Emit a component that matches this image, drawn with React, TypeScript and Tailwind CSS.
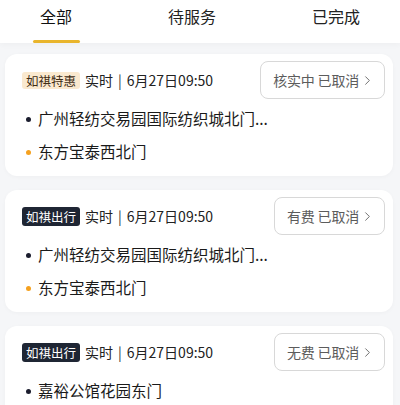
import { ChevronRight } from "lucide-react"

type Order = {
  brand: string
  brandTone: "light" | "dark"
  status: string
  from: string
  to?: string
}

const orders: Order[] = [
  { brand: "如祺特惠", brandTone: "light", status: "核实中 已取消", from: "广州轻纺交易园国际纺织城北门...", to: "东方宝泰西北门" },
  { brand: "如祺出行", brandTone: "dark", status: "有费 已取消", from: "广州轻纺交易园国际纺织城北门...", to: "东方宝泰西北门" },
  { brand: "如祺出行", brandTone: "dark", status: "无费 已取消", from: "嘉裕公馆花园东门", to: "天河城" },
]

const tabs = ["全部", "待服务", "已完成"]

const OrderCard = ({ order }: { order: Order }) => {
  return (
    <div className="ml-[5px] mr-[7px] h-[122px] shrink-0 rounded-[12px] bg-white pl-[17px] pr-[8px] shadow-[0_1px_4px_rgba(0,0,0,0.03)]">
      <div className="flex items-center justify-between pt-[7px]">
        <div className="flex items-center gap-[5px]">
          <span
            className={
              order.brandTone === "light"
                ? "rounded-[3px] bg-[#fae9cf] px-[4px] text-[12.5px] leading-[17px] text-[#3f2c14]"
                : "rounded-[3px] bg-[#1f2634] px-[4px] text-[12.5px] leading-[19px] text-white"
            }
          >
            {order.brand}
          </span>
          <span className="text-[14px] text-[#222]">
            实时<span className="mx-[5px] text-[#333]">|</span>6月27日09:50
          </span>
        </div>
        <div className="flex h-[38px] items-center rounded-[8px] border border-[#d8d8d8] pl-[12px] pr-[9px] text-[14px] tracking-[-0.2px] text-[#5c5c5c]">
          {order.status}
          <ChevronRight size={15} strokeWidth={1.4} className="ml-[1px]" />
        </div>
      </div>
      <div className="mt-[8px] flex flex-col gap-[9px]">
        <div className="flex h-[24px] items-center gap-[7px] pl-[4px]">
          <span className="h-[5px] w-[5px] rounded-full bg-[#1b1d2e]" />
          <span className="text-[15.5px] text-[#1a1a1a]">{order.from}</span>
        </div>
        {order.to && (
          <div className="flex h-[24px] items-center gap-[7px] pl-[4px]">
            <span className="h-[5px] w-[5px] rounded-full bg-[#f5a11f]" />
            <span className="text-[15.5px] text-[#1a1a1a]">{order.to}</span>
          </div>
        )}
      </div>
    </div>
  )
}

export default function App() {
  return (
    <div className="flex h-[405px] w-[400px] flex-col overflow-hidden bg-[#f5f6f8] font-['Noto_Sans_CJK_SC','Noto_Sans',sans-serif]">
      <div className="relative z-10 flex h-[43px] shrink-0 items-start justify-between bg-white px-10 pt-[4px] shadow-[0_2px_6px_rgba(0,0,0,0.03)]">
        {tabs.map((tab, i) => (
          <div key={tab} className="relative flex flex-col items-center">
            <span className={i === 0 ? "text-[16px] leading-[24px] text-[#111]" : "text-[16px] leading-[24px] text-[#222]"}>{tab}</span>
            {i === 0 && <span className="absolute top-[36px] h-[3px] w-[47px] rounded-full bg-[#e9b52c]" />}
          </div>
        ))}
      </div>
      <div className="flex flex-col gap-[14px] pt-[11px]">
        {orders.map((order, i) => (
          <OrderCard key={i} order={order} />
        ))}
      </div>
    </div>
  )
}
